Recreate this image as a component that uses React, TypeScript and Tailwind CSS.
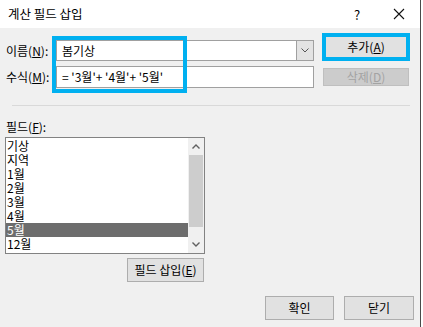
import React from "react";

const font = { fontFamily: '"Noto Sans CJK KR", "Noto Sans", sans-serif' };

function Btn({ children, className = "" }: { children: React.ReactNode; className?: string }) {
  return (
    <div
      className={`flex items-center justify-center bg-[#e1e1e1] border border-[#adadad] text-[12px] leading-none text-black ${className}`}
    >
      {children}
    </div>
  );
}

export default function App() {
  const items = ["기상", "지역", "1월", "2월", "3월", "4월", "5월", "12월"];
  return (
    <div className="w-[423px] h-[327px] flex bg-white overflow-hidden" style={font}>
      <div className="w-[421px] h-full flex flex-col border-r border-[#4a4a4a] relative">
        {/* Title bar */}
        <div className="h-[28px] bg-white flex items-center shrink-0">
          <span className="ml-[8px] text-[12.5px] leading-none text-black">계산 필드 삽입</span>
          <span className="ml-auto w-[14px] text-center text-[13px] leading-none text-black">?</span>
          <span className="ml-[28px] mr-[14px] w-[14px] flex items-center justify-center">
            <svg width="12" height="12" viewBox="0 0 12 12">
              <path d="M1 1 L11 11 M11 1 L1 11" stroke="#111" strokeWidth="1.1" />
            </svg>
          </span>
        </div>

        {/* Body */}
        <div className="flex-1 bg-[#f0f0f0] flex flex-col">
          {/* top area */}
          <div className="h-[77px] flex items-start pt-[5px]">
            <div className="mt-[7px] ml-[6px] w-[308px] flex flex-col">
              <div className="h-[21px] flex items-center">
                <span className="w-[50px] text-[12px] leading-none">
                  이름(<u>N</u>):
                </span>
                <div className="flex-1 h-full bg-white border border-[#a0a0a0] flex items-center">
                  <span className="ml-[5px] text-[12px] leading-none flex-1">봄기상</span>
                  <div className="w-[17px] h-full bg-[#e3e3e3] border-l border-[#a0a0a0] flex items-center justify-center">
                    <svg width="8" height="5" viewBox="0 0 8 5">
                      <path d="M0.5 0.5 L4 4 L7.5 0.5" stroke="#555" strokeWidth="1" fill="none" />
                    </svg>
                  </div>
                </div>
              </div>
              <div className="h-[22px] mt-[5px] flex items-center">
                <span className="w-[50px] text-[12px] leading-none">
                  수식(<u>M</u>):
                </span>
                <div className="flex-1 h-full bg-white border border-[#a0a0a0] flex items-center">
                  <span className="ml-[5px] text-[12px] leading-none whitespace-pre">= '3월'+ '4월'+ '5월'</span>
                </div>
              </div>
            </div>
            <div className="ml-[8px] flex flex-col">
              <div className="w-[88px] h-[28px] border-4 border-[#00b0f0] bg-[#e1e1e1] flex items-center justify-center text-[12px] leading-none">
                추가(<u>A</u>)
              </div>
              <div className="mt-[7px] ml-[1px] w-[86px] h-[18px] bg-[#cccccc] border border-[#bfbfbf] flex items-center justify-center text-[12px] leading-none text-[#a3a3a3]">
                삭제(<u>D</u>)
              </div>
            </div>
          </div>
          {/* separator */}
          <div className="h-px mx-[12px] w-[398px] bg-[#d9d9d9]" />

          <div className="mt-[14px] ml-[6px] h-[14px] flex items-center text-[12px] leading-none">
            필드(<u>F</u>):
          </div>

          {/* list box */}
          <div className="mt-[3px] ml-[5px] w-[200px] h-[117px] border border-[#828282] bg-white flex">
            <div className="flex-1 flex flex-col pt-[1px]">
              {items.map((it) => (
                <div
                  key={it}
                  className={`h-[14px] flex items-center pl-[1px] text-[12px] leading-none ${
                    it === "5월" ? "bg-[#6d6d6d] text-white" : "text-black"
                  }`}
                >
                  {it}
                </div>
              ))}
            </div>
            <div className="w-[16px] bg-[#f0f0f0] flex flex-col">
              <div className="h-[17px] flex items-center justify-center">
                <svg width="8" height="5" viewBox="0 0 8 5">
                  <path d="M0.5 4.5 L4 1 L7.5 4.5" stroke="#606060" strokeWidth="1.4" fill="none" />
                </svg>
              </div>
              <div className="flex-1 flex flex-col">
                <div className="mx-[1px] h-[72px] bg-[#cdcdcd]" />
              </div>
              <div className="h-[17px] flex items-center justify-center">
                <svg width="8" height="5" viewBox="0 0 8 5">
                  <path d="M0.5 0.5 L4 4 L7.5 0.5" stroke="#606060" strokeWidth="1.4" fill="none" />
                </svg>
              </div>
            </div>
          </div>

          <Btn className="mt-[4px] ml-[127px] w-[77px] h-[24px]">
            필드 삽입(<u>E</u>)
          </Btn>

          <div className="mt-[14px] flex justify-end gap-[10px] pr-[6px]">
            <Btn className="w-[69px] h-[24px]">확인</Btn>
            <Btn className="w-[70px] h-[24px]">닫기</Btn>
          </div>
        </div>

        {/* annotation box */}
        <div className="absolute left-[52px] top-[36px] w-[135px] h-[57px] border-4 border-[#00b0f0]" />
      </div>
      <div className="flex-1 bg-white" />
    </div>
  );
}
